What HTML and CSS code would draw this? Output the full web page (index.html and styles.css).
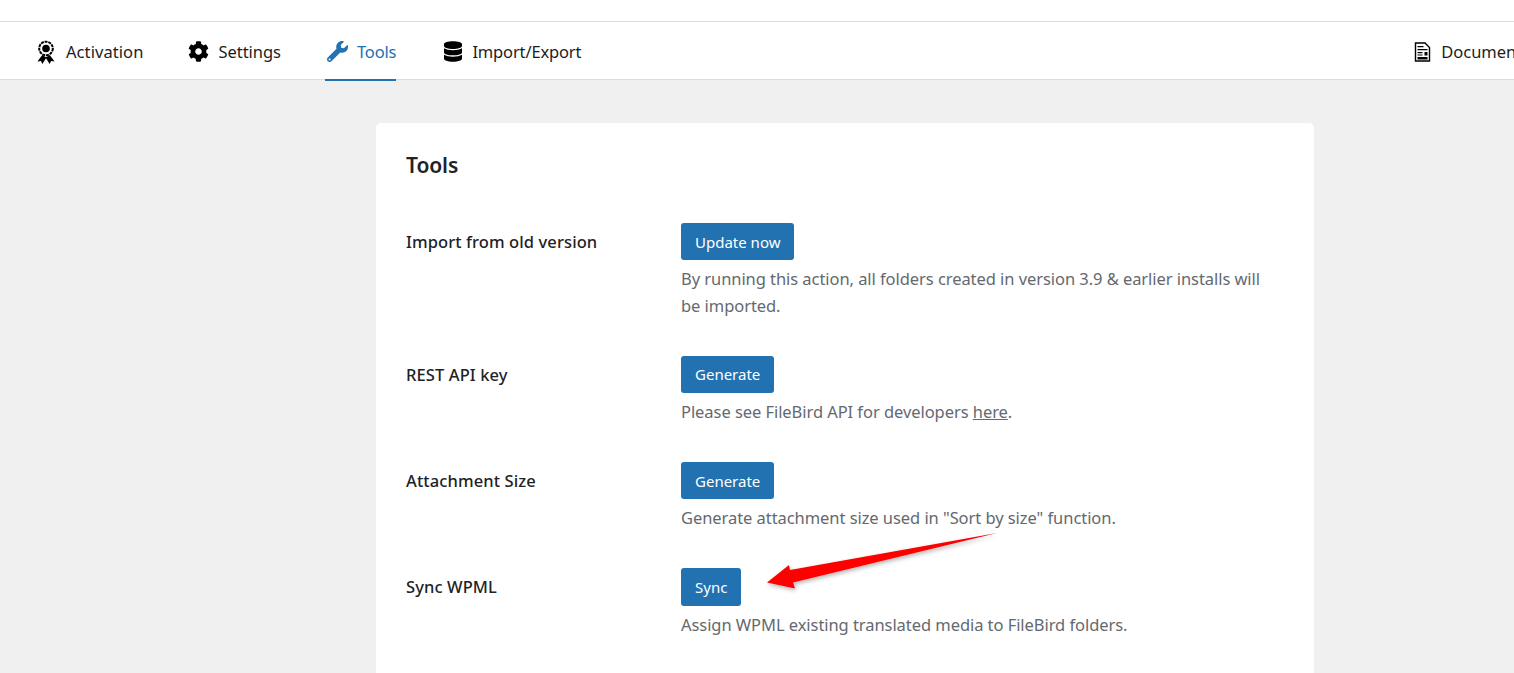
FILE: index.html
```html
<!DOCTYPE html>
<html lang="en">
<head>
<meta charset="utf-8">
<title>FileBird Tools</title>
<link rel="stylesheet" href="styles.css">
</head>
<body>
<div class="top-strip"></div>
<nav class="nav">
  <a class="tab tab-act">
    <svg class="ico" viewBox="0 0 20 24"><g fill="#000"><path d="M6.200 15 1.500 21.500l3.400-.4 1.500 2.900 4-6.500z"/><path d="M13.800 15l4.700 6.500-3.400-.4-1.500 2.900-4-6.500z"/></g><circle cx="10" cy="8.500" r="6.800" fill="#fff" stroke="#000" stroke-width="2" stroke-dasharray="3 .8"/><circle cx="10" cy="8.500" r="3.800" fill="#000"/></svg>
    <span>Activation</span>
  </a>
  <a class="tab">
    <svg class="ico ico-gear" viewBox="0 0 512 512"><path d="M487.4 315.7l-42.6-24.6c4.3-23.2 4.3-47 0-70.2l42.6-24.6c4.9-2.8 7.100-8.600 5.500-14-11.100-35.600-30-67.800-54.700-94.600-3.800-4.100-10-5.100-14.800-2.300L380.800 110c-17.900-15.400-38.500-27.300-60.800-35.100V25.800c0-5.600-3.900-10.500-9.400-11.700-36.700-8.200-74.300-7.800-109.200 0-5.500 1.200-9.400 6.100-9.400 11.700V75c-22.200 7.900-42.800 19.800-60.800 35.100L88.700 85.500c-4.900-2.800-11-1.900-14.800 2.300-24.700 26.700-43.600 58.900-54.700 94.600-1.700 5.400.6 11.200 5.500 14L67.300 221c-4.300 23.200-4.300 47 0 70.200l-42.600 24.600c-4.900 2.800-7.100 8.600-5.500 14 11.100 35.600 30 67.800 54.700 94.600 3.800 4.100 10 5.100 14.800 2.300l42.600-24.600c17.900 15.400 38.500 27.300 60.800 35.100v49.200c0 5.600 3.900 10.500 9.400 11.700 36.700 8.200 74.300 7.800 109.200 0 5.500-1.200 9.400-6.100 9.400-11.700v-49.200c22.200-7.900 42.800-19.800 60.800-35.100l42.600 24.600c4.900 2.800 11 1.900 14.800-2.300 24.700-26.700 43.600-58.900 54.700-94.600 1.500-5.500-.7-11.300-5.600-14.100zM256 336c-44.100 0-80-35.900-80-80s35.900-80 80-80 80 35.900 80 80-35.900 80-80 80z"/></svg>
    <span>Settings</span>
  </a>
  <a class="tab active">
    <svg class="ico ico-gear" viewBox="0 0 512 512"><path fill="#2271b1" d="M507.730 109.100c-2.240-9.030-13.540-12.090-20.120-5.510l-74.360 74.360-67.880-11.310-11.310-67.880 74.360-74.360c6.620-6.620 3.430-17.900-5.660-20.160-47.380-11.740-99.550.91-136.580 37.930-39.640 39.640-50.550 97.100-34.050 147.200L18.740 402.760c-24.990 24.990-24.990 65.510 0 90.500 24.990 24.990 65.510 24.990 90.500 0l213.210-213.210c50.120 16.710 107.470 5.680 147.370-34.220 37.070-37.070 49.700-89.320 37.910-136.730zM64 472c-13.250 0-24-10.750-24-24 0-13.260 10.750-24 24-24s24 10.740 24 24c0 13.250-10.750 24-24 24z"/></svg>
    <span>Tools</span>
  </a>
  <a class="tab tab-db">
    <svg class="ico ico-db" viewBox="0 0 448 512"><path d="M448 73.143v45.714C448 159.143 347.667 192 224 192S0 159.143 0 118.857V73.143C0 32.857 100.333 0 224 0s224 32.857 224 73.143zM448 176v102.857C448 319.143 347.667 352 224 352S0 319.143 0 278.857V176c48.125 33.143 136.208 48.572 224 48.572S399.874 209.143 448 176zm0 160v102.857C448 479.143 347.667 512 224 512S0 479.143 0 438.857V336c48.125 33.143 136.208 48.572 224 48.572S399.874 369.143 448 336z"/></svg>
    <span>Import/Export</span>
  </a>
  <a class="tab tab-doc">
    <svg class="ico ico-page" viewBox="0 0 16 20"><path d="M1 1h9.500L15 5.500V19H1z" fill="#fff" stroke="#000" stroke-width="1.400"/><path d="M3 4h6v1.300H3zM3 7h10v1.300H3zM3 10h5v1.300H3zM3 12.500h5v1H3zM10 10h3v3.500h-3zM3 15h10v2.500H3z"/></svg>
    <span>Documentation</span>
  </a>
</nav>
<main class="content">
  <section class="card">
    <h2 class="card-title">Tools</h2>
    <div class="row row-first">
      <div class="label">Import from old version</div>
      <div class="field">
        <button class="btn">Update now</button>
        <p class="desc">By running this action, all folders created in version 3.9 &amp; earlier installs will be imported.</p>
      </div>
    </div>
    <div class="row">
      <div class="label">REST API key</div>
      <div class="field">
        <button class="btn">Generate</button>
        <p class="desc">Please see FileBird API for developers <a class="desc-link">here</a>.</p>
      </div>
    </div>
    <div class="row">
      <div class="label">Attachment Size</div>
      <div class="field">
        <button class="btn">Generate</button>
        <p class="desc">Generate attachment size used in "Sort by size" function.</p>
      </div>
    </div>
    <div class="row">
      <div class="label">Sync WPML</div>
      <div class="field">
        <button class="btn">Sync</button>
        <p class="desc">Assign WPML existing translated media to FileBird folders.</p>
      </div>
    </div>
  </section>
</main>
<svg class="arrow" viewBox="0 0 260 70" aria-hidden="true">
  <defs><filter id="sh" x="-10%" y="-30%" width="120%" height="170%"><feDropShadow dx="1" dy="2" stdDeviation="2" flood-color="#000" flood-opacity=".3"/></filter></defs>
  <path filter="url(#sh)" fill="#f00" d="M237 3 30 40 29 35 7 52.500 35 58.500 33 52.500z"/>
</svg>
</body>
</html>
```

FILE: styles.css
```css
* { box-sizing: border-box; }
html, body { height: 100%; }
body {
  margin: 0;
  overflow: hidden;
  background: #f0f0f0;
  font-family: "Noto Sans", "Open Sans", "Liberation Sans", sans-serif;
  font-size: 16.5px;
  color: #1d2327;
}
.top-strip {
  height: 22px;
  background: #fff;
  border-bottom: 1px solid #dcdcde;
}
.nav {
  display: flex;
  width: 1640px;
  height: 58px;
  padding-left: 36px;
  gap: 45px;
  background: #fff;
  border-bottom: 1px solid #dcdcde;
}
.tab {
  display: flex;
  align-items: center;
  gap: 10px;
  height: 59px;
  color: #1d1d1d;
  letter-spacing: -.03px;
}
.tab-act { letter-spacing: .07px; }
.tab.active {
  margin-left: -1px;
  padding-left: 2px;
  color: #2271b1;
  letter-spacing: -.15px;
  border-top: 2px solid transparent;
  border-bottom: 2px solid #2271b1;
}
.tab-db { margin-left: 3px; letter-spacing: -.15px; }
.tab-doc { margin-left: 788px; }
.ico { width: 20px; height: 24px; flex: none; }
.ico-gear { width: 21px; height: 21px; margin-right: -1px; }
.ico-db { width: 18px; height: 21px; }
.ico-page { width: 17px; height: 20px; }
.content { display: flex; padding: 43px 200px 0 376px; }
.card {
  width: 938px;
  height: 700px;
  flex: none;
  padding: 28px 30px 0;
  background: #fff;
  border-radius: 5px;
}
.card-title {
  margin: 0 0 43.100px;
  font-size: 21px;
  line-height: 29px;
  font-weight: 600;
  letter-spacing: -.1px;
}
.row { display: flex; padding-bottom: 36.300px; }
.label {
  width: 275px;
  flex: none;
  padding-top: 6px;
  line-height: 26px;
  font-weight: 500;
  letter-spacing: .1px;
}
.field { flex: 1; padding-right: 20px; }
.btn {
  display: block;
  height: 37.400px;
  padding: 0 14px;
  border: 0;
  border-radius: 3px;
  background: #2271b1;
  color: #fff;
  font: inherit;
  font-size: 15px;
}
.desc {
  margin: 6px 0 0;
  color: #646970;
  line-height: 26.500px;
  letter-spacing: -.06px;
}
.desc-link { color: #646970; text-decoration: underline; }
.arrow {
  position: absolute;
  left: 760px;
  top: 530px;
  width: 260px;
  height: 70px;
}
```
